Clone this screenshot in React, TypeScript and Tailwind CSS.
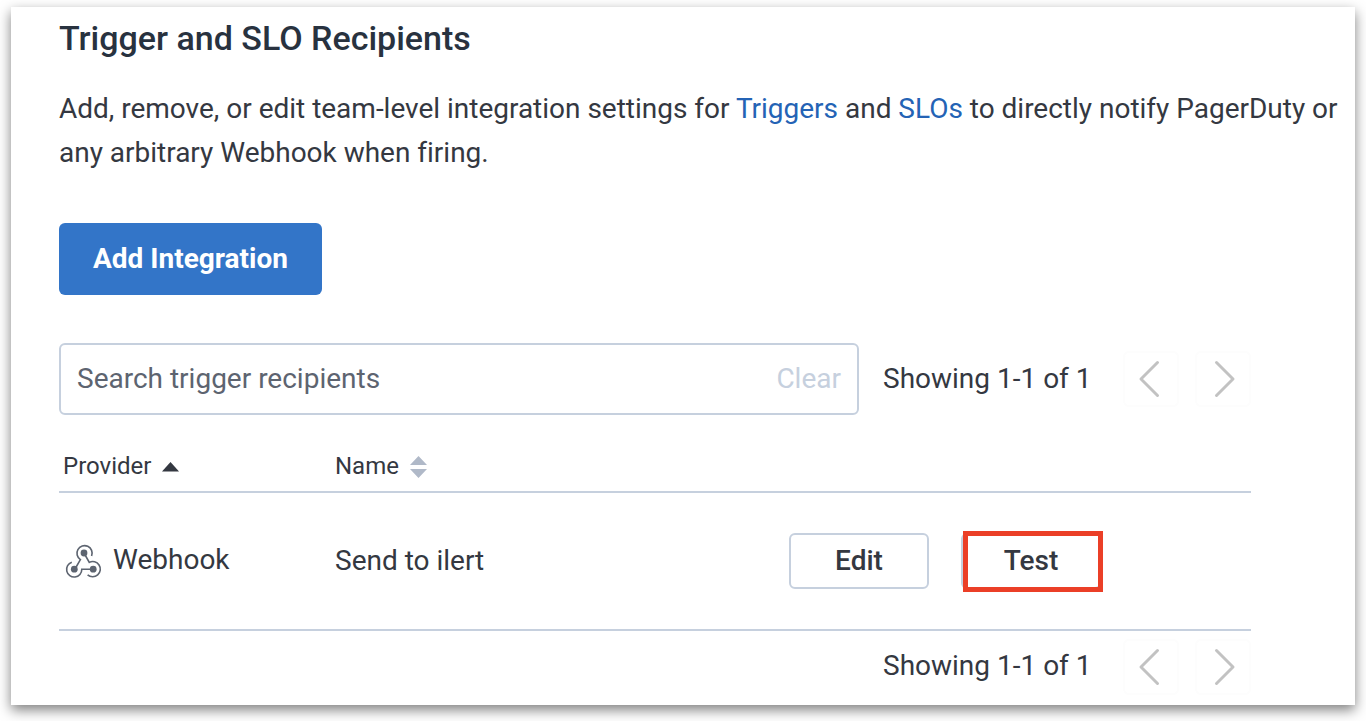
import React from "react";

function WebhookIcon() {
  return (
    <svg width="38" height="36" viewBox="0 0 38 36" fill="none" stroke="#5d6470" strokeWidth="1.6" className="block shrink-0">
      <path d="M26.6 13A7.6 7.6 0 1 0 15.4 16.6L10 26" />
      <path d="M6.8 19.2A7.6 7.6 0 1 0 16.8 26.3H28" />
      <path d="M22.6 31.8A7.6 7.6 0 1 0 24.3 19.4L19 10" />
      <g fill="#5d6470" stroke="none">
        <circle cx="19" cy="10" r="3.4" />
        <circle cx="9.3" cy="26.2" r="3.4" />
        <circle cx="28.2" cy="26.2" r="3.4" />
      </g>
    </svg>
  );
}

function PageButton({ direction }: { direction: "previous" | "next" }) {
  return (
    <button aria-label={direction} className="flex h-14 w-14 items-center justify-center rounded-md border-2 border-[#fdfdfd]">
      <svg width="52" height="52" viewBox="0 0 52 52" fill="none" stroke="#c2c2c2" strokeWidth="3" strokeLinecap="round" strokeLinejoin="round">
        <path d={direction === "previous" ? "M32.5 9.5L16 26L32.5 42.5" : "M19.5 9.5L36 26L19.5 42.5"} />
      </svg>
    </button>
  );
}

function Pager({ className = "" }: { className?: string }) {
  return (
    <div className="flex items-center">
      <span className={`w-[240px] whitespace-nowrap text-[28px] leading-10 ${className}`}>Showing 1-1 of 1</span>
      <div className="flex gap-4">
        <PageButton direction="previous" />
        <PageButton direction="next" />
      </div>
    </div>
  );
}

export default function App() {
  return (
    <div className="h-[721px] overflow-hidden bg-white pt-[7px] pl-[11px] font-['Roboto',sans-serif] text-[#343841]">
      <main className="h-[698px] w-[1344px] bg-white pl-12 shadow-[0_5px_12px_rgba(0,0,0,0.5)]">
        <h1 className="pt-[11px] text-[34px] leading-10 font-medium text-[#28323f]">Trigger and SLO Recipients</h1>
        <p className="mt-[29px] text-[28px] leading-[44px] tracking-[-0.01px] whitespace-nowrap">
          Add, remove, or edit team-level integration settings for <a className="text-[#2463b5]">Triggers</a> and{" "}
          <a className="text-[#2463b5]">SLOs</a> to directly notify PagerDuty or
          <br />
          any arbitrary Webhook when firing.
        </p>
        <button className="mt-12 flex h-[72px] w-[263px] items-center justify-center rounded-md bg-[#3375c8] text-[28px] font-bold whitespace-nowrap text-white">
          Add Integration
        </button>
        <div className="mt-12 flex w-[1192px] items-center justify-between">
          <div className="flex h-[72px] w-[800px] items-center justify-between rounded-md border-2 border-[#c6d0de] px-4 text-[28px]">
            <span className="text-[#5d6470]">Search trigger recipients</span>
            <span className="text-[#c6d0de]">Clear</span>
          </div>
          <Pager />
        </div>
        <section className="w-[1192px]">
          <div className="flex h-[78px] items-end border-b-2 border-[#c6d0de] pb-[9px] pl-1 text-2xl">
            <div className="flex w-[272px] items-center gap-[11px]">
              <span>Provider</span>
              <svg width="17" height="10" viewBox="0 0 17 10" className="mt-0.5"><path d="M8.5 0L17 9.5H0Z" fill="#343841" /></svg>
            </div>
            <div className="flex items-center gap-[11px]">
              <span>Name</span>
              <svg width="17" height="22" viewBox="0 0 17 22" className="mt-0.5"><path d="M8.5 0L17 9H0ZM0 13H17L8.5 22Z" fill="#b0b9c8" /></svg>
            </div>
          </div>
          <div className="flex h-[138px] items-center border-b-2 border-[#c6d0de] pl-1.5 text-[28px]">
            <div className="flex w-[270px] items-center gap-2.5">
              <WebhookIcon />
              <span className="-mt-0.5">Webhook</span>
            </div>
            <span className="w-[454px]">Send to ilert</span>
            <button className="flex h-14 w-[140px] items-center justify-center rounded-md border-2 border-[#c6d0de] font-medium">Edit</button>
            <div className="relative ml-8">
              <button className="flex h-14 w-[140px] items-center justify-center rounded-md border-2 border-[#c6d0de] font-medium">Test</button>
              <div className="absolute -top-0.5 left-0.5 h-[61px] w-[140px] border-[5px] border-[#eb3f27]" />
            </div>
          </div>
          <div className="flex justify-end pt-2">
            <Pager className="-mt-0.5" />
          </div>
        </section>
      </main>
    </div>
  );
}
